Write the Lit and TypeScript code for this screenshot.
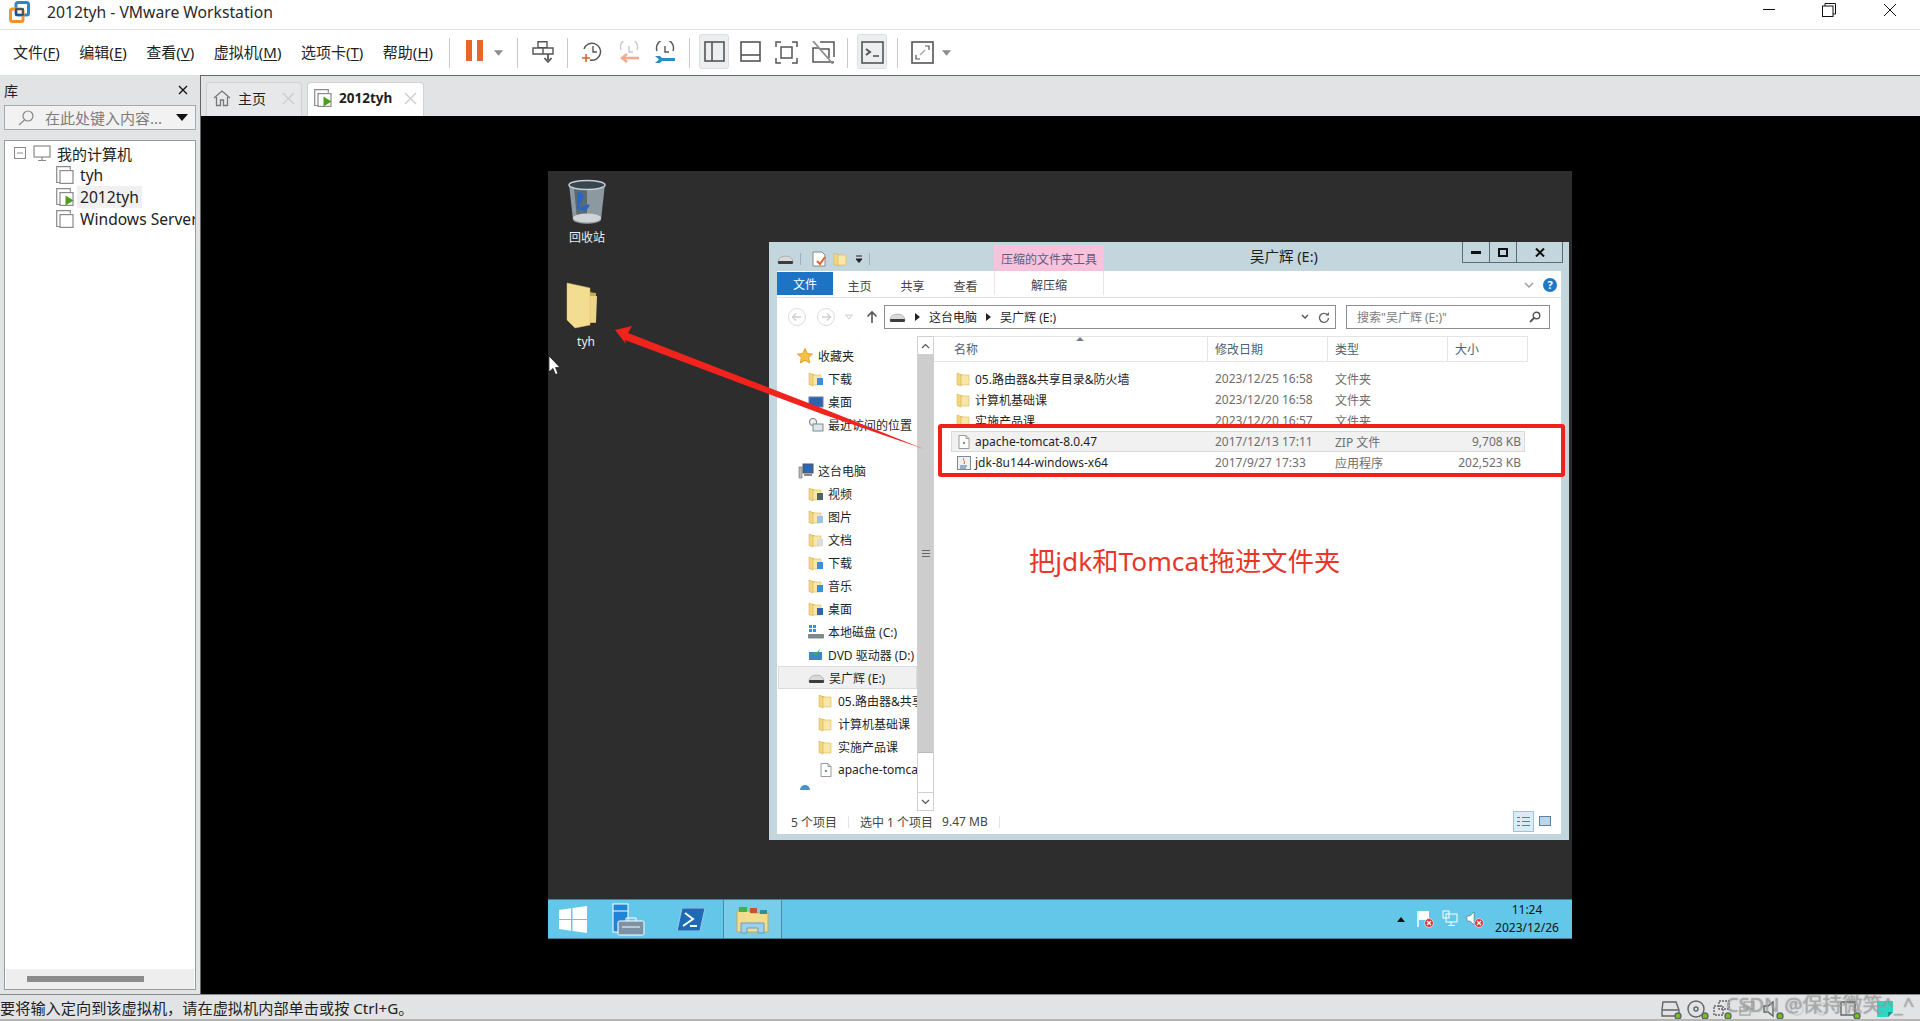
import { css, html, svg, LitElement } from "lit";
import { customElement } from "lit/decorators.js";

const FOLDER = svg`<path d="M1 3h5l1 1v10H1z" fill="#e9c765"/><path d="M4 4h9v10H4z" fill="#f8e7a6" stroke="#d9b95c" stroke-width=".6"/><path d="M1 2l4 1.5V15l-4-1.500z" fill="#f3d67f" stroke="#cfa94c" stroke-width=".5"/>`;

const folderIcon = (badge?: string) => html`<svg class="ico" viewBox="0 0 16 16">
  ${FOLDER}${badge ? svg`<rect x="9" y="7" width="6" height="7" fill=${badge}/>` : ""}
</svg>`;

const zipIcon = () => html`<svg class="ico" viewBox="0 0 16 16">
  <path d="M3 1.500h7l3 3v10H3z" fill="#fff" stroke="#9a9a9a"/>
  <path d="M10 1.500v3h3" fill="none" stroke="#9a9a9a"/>
  <path d="M7 9h2M8 8v2" stroke="#2e9e3a" stroke-width="1.200"/>
</svg>`;

const driveIcon = () => html`<svg class="ico drive" viewBox="0 0 18 12">
  <path d="M1 9c1-4 3-6 8-6s7 2 8 6z" fill="#d9d9d9" stroke="#8e8e8e" stroke-width=".6"/>
  <rect x="1" y="8" width="16" height="3.400" rx="1.400" fill="#3d3d3d"/>
</svg>`;

const vmIcon = (running = false) => html`<svg class="vm-ico" viewBox="0 0 18 18">
  <path d="M4 16.500H.7V.7h13.600v3" fill="none" stroke="#8b8b8b" stroke-width="1.200"/>
  <rect x="4" y="4.600" width="13" height="12.800" fill="#fff" stroke="#8b8b8b" stroke-width="1.200"/>
  ${running ? svg`<path d="M9.500 7.600v10l8-5z" fill="#4f9d1d"/>` : ""}
</svg>`;

const errBadge = svg`<circle cx="13" cy="13" r="4.400" fill="#d8343c" stroke="#fff" stroke-width=".6"/><path d="M11 11l4 4M15 11l-4 4" stroke="#fff" stroke-width="1.200"/>`;

const MENUS: [string, string][] = [
  ["文件", "F"],
  ["编辑", "E"],
  ["查看", "V"],
  ["虚拟机", "M"],
  ["选项卡", "T"],
  ["帮助", "H"],
];

const NAV: { label: string; level: number; icon: unknown; sel?: boolean }[] = [
  { label: "下载", level: 1, icon: folderIcon("#3b8ed8") },
  { label: "桌面", level: 1, icon: html`<svg class="ico" viewBox="0 0 16 16"><rect x="1" y="3" width="14" height="10" fill="#2f63ad" stroke="#5d7fa8"/></svg>` },
  { label: "最近访问的位置", level: 1, icon: html`<svg class="ico" viewBox="0 0 16 16"><circle cx="5" cy="5" r="3.600" fill="#eee" stroke="#777"/><rect x="5" y="7" width="10" height="7" fill="#dde6ea" stroke="#7a8a92"/></svg>` },
  { label: "", level: 0, icon: "" },
  { label: "这台电脑", level: 0, icon: html`<svg class="ico" viewBox="0 0 16 16"><rect x="5" y="1" width="10" height="9" fill="#2c66b5" stroke="#555"/><rect x="1" y="4" width="3" height="11" fill="#bbb" stroke="#666" stroke-width=".6"/><rect x="6" y="11" width="8" height="2" fill="#888"/></svg>` },
  { label: "视频", level: 1, icon: folderIcon("#50606e") },
  { label: "图片", level: 1, icon: folderIcon("#9ec4dd") },
  { label: "文档", level: 1, icon: folderIcon("#d9dde0") },
  { label: "下载", level: 1, icon: folderIcon("#3b8ed8") },
  { label: "音乐", level: 1, icon: folderIcon("#3b8ed8") },
  { label: "桌面", level: 1, icon: folderIcon("#2f63ad") },
  { label: "本地磁盘 (C:)", level: 1, icon: html`<svg class="ico" viewBox="0 0 16 16"><path d="M1 1h3v3H1zM5 1h3v3H5zM1 5h3v3H1zM5 5h3v3H5z" fill="#18a0dc"/><rect x="0" y="10" width="16" height="4.500" rx="1" fill="#7c8a8c"/></svg>` },
  { label: "DVD 驱动器 (D:)", level: 1, icon: html`<svg class="ico" viewBox="0 0 16 16"><rect x="1" y="5" width="13" height="8" fill="#3f86c8"/><path d="M4 6l4 3 5-8-5 5z" fill="#3fb04a"/></svg>` },
  { label: "吴广辉 (E:)", level: 1, icon: driveIcon(), sel: true },
  { label: "05.路由器&共享目录&防火墙", level: 2, icon: folderIcon() },
  { label: "计算机基础课", level: 2, icon: folderIcon() },
  { label: "实施产品课", level: 2, icon: folderIcon() },
  { label: "apache-tomcat-8.0.47", level: 2, icon: zipIcon() },
];

const FILES = [
  { name: "05.路由器&共享目录&防火墙", date: "2023/12/25 16:58", type: "文件夹", size: "", icon: folderIcon() },
  { name: "计算机基础课", date: "2023/12/20 16:58", type: "文件夹", size: "", icon: folderIcon() },
  { name: "实施产品课", date: "2023/12/20 16:57", type: "文件夹", size: "", icon: folderIcon() },
  { name: "apache-tomcat-8.0.47", date: "2017/12/13 17:11", type: "ZIP 文件", size: "9,708 KB", icon: zipIcon(), sel: true },
  {
    name: "jdk-8u144-windows-x64",
    date: "2017/9/27 17:33",
    type: "应用程序",
    size: "202,523 KB",
    icon: html`<svg class="ico" viewBox="0 0 16 16"><rect x="1.500" y="1.500" width="13" height="13" fill="#eef1f4" stroke="#7d8a96"/><path d="M4 11h7M4 13h6" stroke="#3f6fa8"/><path d="M8 3c-2 2 2 3 0 6" fill="none" stroke="#d9622b"/></svg>`,
  },
];

@customElement("guest-explorer")
export class GuestExplorer extends LitElement {
  static styles = css`
    :host {
      position: absolute;
      left: 221px;
      top: 71px;
      width: 800px;
      height: 598px;
      box-sizing: border-box;
      padding: 0 8px 6px;
      background: #c3d6dd;
      display: flex;
      flex-direction: column;
      color: #1f1f1f;
      font: 12px "Noto Sans", "Noto Sans CJK SC", sans-serif;
    }
    .ico {
      width: 16px;
      height: 16px;
      flex: none;
    }
    .ico.drive {
      width: 17px;
      height: 12px;
    }
    .title {
      height: 29px;
      flex: none;
      display: flex;
      position: relative;
      align-items: center;
    }
    .qat {
      display: flex;
      align-items: center;
      gap: 6px;
      padding-top: 4px;
    }
    .qat i {
      width: 1px;
      height: 12px;
      background: #9fb0b8;
    }
    .qat .doc {
      margin-left: 4px;
    }
    .context {
      position: absolute;
      left: 217px;
      top: 3px;
      width: 110px;
      height: 27px;
      background: #f9c2dc;
      color: #5d5d78;
      display: flex;
      align-items: center;
      justify-content: center;
    }
    .caption {
      position: absolute;
      left: 473px;
      top: 4px;
      font-size: 14.500px;
      line-height: 20px;
    }
    .controls {
      position: absolute;
      right: -2px;
      top: 0;
      height: 21px;
      display: flex;
      border: 1px solid #5d6c74;
      border-top: 0;
      box-sizing: border-box;
    }
    .controls span {
      display: flex;
      align-items: center;
      justify-content: center;
      border-left: 1px solid #5d6c74;
      width: 26px;
    }
    .controls span:first-child {
      border-left: 0;
      width: 26px;
    }
    .controls span:last-child {
      width: 45px;
    }
    .ribbon {
      height: 27px;
      flex: none;
      background: #fff;
      border-bottom: 1px solid #e2e2e2;
      box-sizing: border-box;
      display: flex;
      position: relative;
      align-items: flex-start;
      color: #444;
    }
    .file-tab {
      width: 56px;
      height: 23px;
      margin-top: 1px;
      background: #1e74c4;
      color: #fff;
      display: flex;
      align-items: center;
      justify-content: center;
      margin-right: -7px;
    }
    .rtab {
      margin-left: 14px;
      width: 39px;
      height: 24px;
      padding-top: 3px;
      display: flex;
      align-items: center;
      justify-content: center;
    }
    .extract {
      position: absolute;
      left: 217px;
      width: 110px;
      height: 24px;
      padding-top: 3px;
      box-sizing: border-box;
      border: solid #f2dfe8;
      border-width: 0 1px;
      display: flex;
      align-items: center;
      justify-content: center;
    }
    .ribbon-end {
      margin-left: auto;
      display: flex;
      align-items: center;
      gap: 9px;
      height: 26px;
      padding: 2px 4px 0 0;
      box-sizing: border-box;
    }
    .body {
      flex: 1;
      min-height: 0;
      background: #fff;
      display: flex;
      flex-direction: column;
    }
    .address {
      height: 38px;
      flex: none;
      display: flex;
      align-items: center;
      padding: 0 11px 0 10px;
      box-sizing: border-box;
    }
    .addr-box {
      width: 452px;
      margin-left: 6px;
      height: 24px;
      border: 1px solid #8d8d8d;
      box-sizing: border-box;
      display: flex;
      align-items: center;
      padding: 0 5px 0 4px;
      gap: 9px;
    }
    .addr-box .end {
      margin-left: auto;
      display: flex;
      gap: 9px;
      align-items: center;
    }
    .search {
      margin-left: 10px;
      flex: 1;
      height: 24px;
      border: 1px solid #8d8d8d;
      box-sizing: border-box;
      display: flex;
      align-items: center;
      padding: 0 8px 0 10px;
      color: #7d7d7d;
      justify-content: space-between;
    }
    .main {
      flex: 1;
      min-height: 0;
      display: flex;
    }
    .nav {
      width: 140px;
      flex: none;
      padding-top: 8px;
      box-sizing: border-box;
      overflow: hidden;
    }
    .nav-row {
      height: 23px;
      flex: none;
      display: flex;
      align-items: center;
      gap: 4px;
      white-space: nowrap;
      box-sizing: border-box;
      overflow: hidden;
    }
    .nav-row.sel {
      background: #f0f0f0;
      border: 1px solid #dcdcdc;
      margin-left: 1px;
    }
    .net-arc {
      display: block;
      margin: 3px 0 0 20px;
    }
    .scroll {
      width: 17px;
      flex: none;
      border: 1px solid #d0d0d0;
      border-width: 0 1px;
      box-sizing: border-box;
      display: flex;
      flex-direction: column;
    }
    .scroll .btn {
      height: 17px;
      flex: none;
      display: flex;
      align-items: center;
      justify-content: center;
      border: 1px solid #d0d0d0;
      margin: 0 -1px;
      background: #fff;
    }
    .scroll .thumb {
      height: 397px;
      flex: none;
      background: #cdcdcd;
      border-bottom: 1px solid #bbb;
      display: flex;
      align-items: center;
      justify-content: center;
    }
    .scroll .rest {
      flex: 1;
    }
    .list {
      flex: 1;
      min-width: 0;
      position: relative;
    }
    .head {
      height: 26px;
      display: grid;
      grid-template-columns: 274px 120px 120px 80px;
      color: #4d6172;
      box-sizing: border-box;
      border-bottom: 1px solid #e4e4e4;
      border-top: 1px solid #e4e4e4;
      width: 594px;
    }
    .head span {
      padding-left: 7px;
      border-right: 1px solid #e4e4e4;
      line-height: 25px;
    }
    .head span:first-child {
      padding-left: 20px;
    }
    .sort {
      position: absolute;
      left: 142px;
      top: 1px;
      width: 0;
      height: 0;
      border: 4px solid transparent;
      border-top: 0;
      border-bottom: 4px solid #6e8090;
    }
    .rows {
      padding: 6px 0 0 17px;
      width: 591px;
      box-sizing: border-box;
    }
    .row {
      height: 21px;
      box-sizing: border-box;
      display: grid;
      grid-template-columns: 264px 120px 120px 1fr;
      align-items: center;
      color: #6d6d6d;
    }
    .row.sel {
      background: #f1f1f1;
      outline: 1px solid #d9d9d9;
      outline-offset: -1px;
    }
    .row .name {
      display: flex;
      align-items: center;
      gap: 3px;
      color: #1f1f1f;
      padding-left: 5px;
    }
    .row .size {
      text-align: right;
      padding-right: 4px;
    }
    .mark {
      position: absolute;
      left: 4px;
      top: 88px;
      width: 627px;
      height: 53px;
      box-sizing: border-box;
      border: 4px solid #ef2218;
      border-radius: 3px;
    }
    .note {
      position: absolute;
      left: 95px;
      top: 207px;
      font-size: 26.300px;
      line-height: 36px;
      color: #e8362a;
      white-space: nowrap;
    }
    .status {
      height: 23px;
      flex: none;
      display: flex;
      align-items: center;
      padding: 0 0 2px 14px;
      box-sizing: border-box;
      color: #444;
    }
    .status i {
      width: 1px;
      height: 12px;
      background: #e4e4e4;
      margin: 0 11px;
    }
    .views {
      margin-left: auto;
      padding-right: 10px;
      display: flex;
      gap: 5px;
      align-items: center;
    }
    .views span {
      width: 21px;
      height: 21px;
      box-sizing: border-box;
      background: #dcecf6;
      border: 1px solid #9cc3dd;
      display: flex;
      align-items: center;
      justify-content: center;
    }
  `;

  render() {
    const navCircle = (d: string) => html`<svg width="20" height="20" viewBox="0 0 20 20">
      <circle cx="10" cy="10" r="8.500" fill="none" stroke="#dcdcdc"/>
      <path d=${d} fill="none" stroke="#d0d0d0" stroke-width="1.400"/>
    </svg>`;
    return html`
      <div class="title">
        <div class="qat">
          ${driveIcon()}<i></i>
          <svg class="ico doc" viewBox="0 0 16 16"><path d="M2 1h9l3 3v11H2z" fill="#fff" stroke="#888"/><path d="M6 10l3 3 5-7" fill="none" stroke="#e2622a" stroke-width="2"/></svg>
          <svg class="ico" viewBox="0 0 16 16">${FOLDER}</svg>
          <svg width="8" height="8" viewBox="0 0 8 8"><path d="M1 1h6M1 4h6L4 7.500z" stroke="#222" fill="#222"/></svg>
          <i></i>
        </div>
        <div class="context">压缩的文件夹工具</div>
        <div class="caption">吴广辉 (E:)</div>
        <div class="controls">
          <span><svg width="10" height="4"><rect width="10" height="3" y="1" fill="#111"/></svg></span>
          <span><svg width="10" height="9"><rect x="1" y="1" width="8" height="7" fill="none" stroke="#111" stroke-width="2"/></svg></span>
          <span><svg width="10" height="9" viewBox="0 0 10 9"><path d="M1 .5l8 8M9 .5l-8 8" stroke="#111" stroke-width="2"/></svg></span>
        </div>
      </div>
      <div class="ribbon">
        <div class="file-tab">文件</div>
        <div class="rtab">主页</div>
        <div class="rtab">共享</div>
        <div class="rtab">查看</div>
        <div class="extract">解压缩</div>
        <div class="ribbon-end">
          <svg width="10" height="6" viewBox="0 0 10 6"><path d="M1 1l4 4 4-4" fill="none" stroke="#999" stroke-width="1.400"/></svg>
          <svg width="14" height="14" viewBox="0 0 14 14"><circle cx="7" cy="7" r="7" fill="#1f78c8"/><text x="7" y="11" font-size="11" font-weight="700" text-anchor="middle" fill="#fff" font-family="Noto Sans">?</text></svg>
        </div>
      </div>
      <div class="body">
        <div class="address">
          ${navCircle("M14 10H6M9 6.500L5.500 10 9 13.500")}
          <span style="width:9px"></span>
          ${navCircle("M6 10h8M11 6.500l3.500 3.500-3.500 3.500")}
          <svg width="30" height="8" viewBox="0 0 30 8"><path d="M9.500 2h7L13 6z" fill="none" stroke="#ccc"/></svg>
          <svg width="12" height="14" viewBox="0 0 12 14"><path d="M6 13V2M1.500 6.500L6 2l4.500 4.500" fill="none" stroke="#555" stroke-width="1.600"/></svg>
          <div class="addr-box">
            ${driveIcon()}
            <svg width="5" height="8" viewBox="0 0 5 8"><path d="M0 0l5 4-5 4z" fill="#222"/></svg>
            <span>这台电脑</span>
            <svg width="5" height="8" viewBox="0 0 5 8"><path d="M0 0l5 4-5 4z" fill="#222"/></svg>
            <span>吴广辉 (E:)</span>
            <span class="end">
              <svg width="8" height="6" viewBox="0 0 8 6"><path d="M1 1l3 3 3-3" fill="none" stroke="#555" stroke-width="1.400"/></svg>
              <svg width="12" height="12" viewBox="0 0 12 12"><path d="M9.500 4A4.500 4.500 0 1 0 10.500 7" fill="none" stroke="#666" stroke-width="1.400"/><path d="M7.500 4.500h3.500V1z" fill="#666"/></svg>
            </span>
          </div>
          <div class="search">
            <span>搜索"吴广辉 (E:)"</span>
            <svg width="12" height="12" viewBox="0 0 12 12"><circle cx="7.500" cy="4.500" r="3.300" fill="none" stroke="#555" stroke-width="1.400"/><path d="M5 7l-4 4" stroke="#555" stroke-width="1.800"/></svg>
          </div>
        </div>
        <div class="main">
          <div class="nav">
            <div class="nav-row" style="padding-left:20px;gap:5px">
              <svg class="ico" viewBox="0 0 16 16"><path d="M8 .5l2.300 5 5.200.6-3.900 3.500 1.100 5.400L8 12.200 3.300 15l1.100-5.400L.5 6.100l5.200-.6z" fill="#f5c242" stroke="#d88f1e" stroke-width=".8"/></svg>
              <span>收藏夹</span>
            </div>
            ${NAV.map(
              (n) => html`<div
                class="nav-row ${n.sel ? "sel" : ""}"
                style="padding-left:${n.sel ? 29 : 21 + n.level * 10}px"
              >
                ${n.icon}<span>${n.label}</span>
              </div>`,
            )}
            <svg class="net-arc" width="16" height="6" viewBox="0 0 16 6"><path d="M3 6a5 5 0 0 1 10 0z" fill="#4a93c4"/></svg>
          </div>
          <div class="scroll">
            <div class="btn">
              <svg width="9" height="6" viewBox="0 0 9 6"><path d="M1 5l3.500-3.500L8 5" fill="none" stroke="#555" stroke-width="1.200"/></svg>
            </div>
            <div class="thumb">
              <svg width="8" height="7"><path d="M0 .5h8M0 3.500h8M0 6.500h8" stroke="#666"/></svg>
            </div>
            <div class="rest"></div>
            <div class="btn">
              <svg width="9" height="6" viewBox="0 0 9 6"><path d="M1 1l3.500 3.500L8 1" fill="none" stroke="#555" stroke-width="1.200"/></svg>
            </div>
          </div>
          <div class="list">
            <div class="head">
              <span>名称</span><span>修改日期</span><span>类型</span><span>大小</span>
            </div>
            <div class="sort"></div>
            <div class="rows">
              ${FILES.map(
                (f) => html`<div class="row ${f.sel ? "sel" : ""}">
                  <div class="name">${f.icon}<span>${f.name}</span></div>
                  <span>${f.date}</span>
                  <span>${f.type}</span>
                  <span class="size">${f.size}</span>
                </div>`,
              )}
            </div>
            <div class="mark"></div>
            <div class="note">把jdk和Tomcat拖进文件夹</div>
          </div>
        </div>
        <div class="status">
          <span>5 个项目</span><i></i><span>选中 1 个项目</span>
          <span style="margin-left:9px">9.47 MB</span><i></i>
          <div class="views">
            <span><svg width="13" height="11"><path d="M0 1.500h3M5 1.500h8M0 5.500h3M5 5.500h8M0 9.500h3M5 9.500h8" stroke="#4a7fa8"/></svg></span>
            <svg width="12" height="11"><rect x=".5" y=".5" width="11" height="9" fill="#bcd6e8" stroke="#5a84a4"/></svg>
          </div>
        </div>
      </div>
    `;
  }
}

@customElement("app-root")
export class AppRoot extends LitElement {
  static styles = css`
    :host {
      display: flex;
      flex-direction: column;
      width: 1920px;
      height: 1021px;
      overflow: hidden;
      background: #e1e3e5;
      color: #222;
      font: 15px "Noto Sans", "Noto Sans CJK SC", sans-serif;
    }
    .titlebar {
      height: 29px;
      flex: none;
      background: #fff;
      display: flex;
      align-items: center;
      padding-left: 9px;
      position: relative;
    }
    .titlebar .name {
      margin-left: 17px;
      font-size: 15.700px;
      color: #2a2a2a;
      margin-top: -5px;
    }
    .win-btns {
      margin-left: auto;
      display: flex;
      align-items: center;
      padding-right: 23px;
      gap: 47px;
      margin-top: -9px;
    }
    .toolbar {
      height: 46px;
      flex: none;
      background: #fff;
      border-top: 1px solid #e3e3e3;
      box-sizing: border-box;
      display: flex;
      align-items: center;
      position: relative;
    }
    .menus {
      display: flex;
      padding-left: 13px;
      gap: 19.500px;
      width: 445px;
      box-sizing: border-box;
      flex: none;
      font-size: 15px;
      white-space: nowrap;
      margin-top: -3px;
    }
    .menus u {
      text-underline-offset: 2px;
    }
    .sep {
      position: absolute;
      width: 1px;
      height: 30px;
      top: 8px;
      background: #c9c9c9;
    }
    .tool {
      position: absolute;
      top: 11px;
    }
    .toggle {
      position: absolute;
      top: 4px;
      width: 30px;
      height: 35px;
      box-sizing: border-box;
      background: #eceeef;
      border: 1px solid #dcdee0;
      border-radius: 3px;
    }
    .caret {
      position: absolute;
      width: 9px;
      height: 6px;
      top: 20px;
    }
    .content {
      flex: 1;
      min-height: 0;
      display: flex;
    }
    .library {
      width: 200px;
      flex: none;
      box-sizing: border-box;
      display: flex;
      flex-direction: column;
      padding: 0 4px 4px;
    }
    .lib-head {
      height: 30px;
      flex: none;
      display: flex;
      align-items: center;
      justify-content: space-between;
      padding-right: 8px;
      font-size: 14px;
    }
    .lib-search {
      height: 25px;
      flex: none;
      border: 1px solid #a6a8aa;
      background: #f2f2f2;
      box-sizing: border-box;
      display: flex;
      align-items: center;
      padding: 0 7px 0 13px;
      color: #7d7d7d;
      font-size: 15px;
      gap: 11px;
      white-space: nowrap;
    }
    .lib-search .down {
      margin-left: auto;
      width: 0;
      height: 0;
      border: 6px solid transparent;
      border-top: 7px solid #111;
      border-bottom: 0;
    }
    .tree {
      margin-top: 10px;
      flex: 1;
      min-height: 0;
      width: 192px;
      background: #fff;
      border: 1px solid #9a9a9a;
      box-sizing: border-box;
      display: flex;
      flex-direction: column;
      padding-top: 1px;
    }
    .tree-row {
      height: 22px;
      display: flex;
      align-items: center;
      white-space: nowrap;
      overflow: hidden;
      padding-left: 9px;
      gap: 3px;
      flex: none;
    }
    .tree-row.child {
      padding-left: 51px;
      gap: 6px;
      font-size: 15.600px;
    }
    .tree-row .hl {
      background: #f0f0f0;
      padding: 0 3px;
      margin-left: -3px;
      line-height: 22px;
    }
    .vm-ico {
      width: 18px;
      height: 18px;
      flex: none;
    }
    .hscroll {
      margin-top: auto;
      height: 20px;
      background: #eee;
      margin-left: 1px;
      margin-right: 1px;
      display: flex;
      align-items: center;
      padding-left: 21px;
    }
    .hscroll div {
      width: 117px;
      height: 6px;
      background: #8b8b8b;
    }
    .vmpane {
      flex: 1;
      min-width: 0;
      display: flex;
      flex-direction: column;
      border: solid #666;
      border-width: 1px 0 0 1px;
      padding-top: 6px;
    }
    .tabs {
      height: 34px;
      flex: none;
      display: flex;
      padding-left: 5px;
      gap: 5px;
      align-items: flex-end;
    }
    .tab {
      height: 34px;
      box-sizing: border-box;
      display: flex;
      align-items: center;
      border: 1px solid #cfd1d3;
      border-bottom: 0;
      border-radius: 4px 4px 0 0;
      padding: 0 6px 3px;
      gap: 7px;
      font-size: 14px;
    }
    .tab.home {
      width: 96px;
      background: #e6e8ea;
    }
    .tab.on {
      width: 117px;
      background: #fff;
      font-weight: 700;
      font-size: 13.500px;
    }
    .screen {
      flex: 1;
      min-height: 0;
      background: #000;
      padding: 55px 0 0 347px;
      box-sizing: border-box;
    }
    .guest {
      width: 1024px;
      height: 768px;
      background: #2d2d2d;
      position: relative;
      display: flex;
      flex-direction: column;
    }
    .desk-icon {
      position: absolute;
      width: 60px;
      display: flex;
      flex-direction: column;
      align-items: center;
      color: #eee;
      font-size: 12px;
    }
    .cursor {
      position: absolute;
      left: 0;
      top: 185px;
    }
    .arrow {
      position: absolute;
      left: 0;
      top: 0;
      z-index: 2;
      pointer-events: none;
    }
    .taskbar {
      margin-top: auto;
      height: 40px;
      flex: none;
      background: #63c7ea;
      border: solid #4b7f96;
      border-width: 1px 0;
      box-sizing: border-box;
      display: flex;
      align-items: center;
      font-size: 12px;
      color: #111;
    }
    .task {
      display: flex;
      align-items: center;
      height: 100%;
    }
    .task.active {
      width: 59px;
      justify-content: center;
      background: #78cdea;
      border: solid #4b8aa6;
      border-width: 0 1px;
      box-sizing: border-box;
      margin-left: 18px;
    }
    .tray {
      margin-left: auto;
      display: flex;
      align-items: center;
      gap: 8px;
      padding-right: 12px;
    }
    .tray .up {
      margin-right: 3px;
    }
    .clock {
      width: 66px;
      margin-left: 2px;
      text-align: center;
      line-height: 18px;
    }
    .statusbar {
      height: 27px;
      flex: none;
      border-top: 1px solid #8a8a8a;
      border-bottom: 2px solid #b5b5b5;
      box-sizing: border-box;
      display: flex;
      align-items: center;
      position: relative;
      font-size: 15.200px;
      white-space: nowrap;
    }
    .devices {
      position: absolute;
      left: 0;
      top: 0;
    }
    .device {
      position: absolute;
      top: 4px;
    }
    .watermark {
      position: absolute;
      left: 1726px;
      top: -4px;
      font-size: 20px;
      line-height: 28px;
      color: rgba(200, 200, 200, 0.6);
      text-shadow: 0 0 1px rgba(70, 70, 70, 0.7);
    }
    .sticky {
      position: absolute;
      left: 1876px;
      top: 5px;
    }
  `;

  private _tools() {
    const stroke = "#555";
    return html`
      <svg class="tool" style="left:466px;top:10px" width="19" height="23"><rect width="6" height="21" fill="#e8662d"/><rect x="11" width="6" height="21" fill="#e8662d"/></svg>
      <svg class="caret" style="left:494px" viewBox="0 0 10 6"><path d="M0 0h10L5 6z" fill="#8b8b8b"/></svg>
      <svg class="tool" style="left:532px" width="22" height="23" viewBox="0 0 22 23" fill="none" stroke=${stroke} stroke-width="1.400">
        <path d="M6 .7h9v6H6zM1 7h10v6H1zM11 7h10v6H11z"/><path d="M16 13v6M12.500 17l3.500 4 3.500-4" stroke-width="1.800"/>
      </svg>
      <svg class="tool" style="left:581px" width="22" height="23" viewBox="0 0 22 23" fill="none">
        <path d="M3 8a8.500 8.500 0 1 1 6 11" stroke=${stroke} stroke-width="1.400"/><path d="M12 5v6h4" stroke=${stroke} stroke-width="1.400"/>
        <path d="M1 17h8M5 13v8" stroke="#d9622b" stroke-width="1.600"/>
      </svg>
      <svg class="tool" style="left:618px" width="22" height="23" viewBox="0 0 22 23" fill="none">
        <path d="M3 9a8.500 8.500 0 1 1 16 0" stroke="#c9c9c9" stroke-width="1.400"/><path d="M11 5v6h4" stroke="#c9c9c9" stroke-width="1.400"/>
        <path d="M21 17H6M9 13l-5 4 5 4" stroke="#f4a98a" stroke-width="2.400"/>
      </svg>
      <svg class="tool" style="left:654px" width="22" height="23" viewBox="0 0 22 23" fill="none">
        <path d="M3 10a8.500 8.500 0 1 1 16 0" stroke=${stroke} stroke-width="1.400"/><path d="M11 5v6h4" stroke=${stroke} stroke-width="1.400"/>
        <path d="M1 15h5l2 2h13v3H8l-2 2H1l4-3.500z" fill="#2f8ccb"/>
      </svg>
      <div class="toggle" style="left:699px"></div>
      <svg class="tool" style="left:704px" width="21" height="21" fill="none" stroke=${stroke} stroke-width="1.600"><rect x="1" y="1" width="19" height="19"/><path d="M8 1v19"/></svg>
      <svg class="tool" style="left:740px" width="21" height="21" fill="none" stroke=${stroke} stroke-width="1.600"><rect x="1" y="1" width="19" height="19"/><path d="M1 14h19"/></svg>
      <svg class="tool" style="left:775px" width="23" height="23" fill="none" stroke=${stroke} stroke-width="1.500"><path d="M1 6V1h5M17 1h5v5M22 17v5h-5M6 22H1v-5"/><rect x="6" y="6" width="11" height="11"/></svg>
      <svg class="tool" style="left:812px" width="23" height="23" fill="none" stroke=${stroke} stroke-width="1.500"><path d="M8 1h14v15M22 21H1V7h6"/><path d="M7 8h10v9" /><path d="M1 0l20 23" stroke="#8d8f92" stroke-width="1.800"/></svg>
      <div class="toggle" style="left:857px"></div>
      <svg class="tool" style="left:861px" width="23" height="23" fill="none" stroke=${stroke} stroke-width="1.600"><rect x="1" y="1" width="21" height="21"/><path d="M5 8l4 3-4 3" stroke-width="2"/><path d="M12 15h6"/></svg>
      <svg class="tool" style="left:911px" width="23" height="23" fill="none" stroke=${stroke} stroke-width="1.600"><rect x="1" y="1" width="21" height="21"/><path d="M9 14l5-5" stroke="#aaa"/><path d="M14 5h4v4" stroke-width="1.200"/><path d="M5 14v4h4" stroke-width="1.200"/></svg>
      <svg class="caret" style="left:942px" viewBox="0 0 10 6"><path d="M0 0h10L5 6z" fill="#8b8b8b"/></svg>
    `;
  }

  private _devices() {
    const dot = (x: number) => svg`<circle cx=${x} cy="17" r="3" fill="#6fbf1f"/>`;
    return html`
      <svg class="device" style="left:1660px" width="24" height="20" fill="none" stroke="#666" stroke-width="1.400"><path d="M3 3h13l3 8v6H2v-6zM2 11h17"/>${dot(18)}</svg>
      <svg class="device" style="left:1686px" width="24" height="20" fill="none" stroke="#666" stroke-width="1.400"><circle cx="10" cy="10" r="8"/><circle cx="10" cy="10" r="2"/>${dot(19)}</svg>
      <svg class="device" style="left:1712px" width="24" height="20" fill="none" stroke="#666" stroke-width="1.400"><path d="M7 2h10v8H7zM2 7h9v9H2z" stroke-dasharray="2 1"/>${dot(16)}</svg>
      <svg class="device" style="left:1738px" width="22" height="20" fill="none" stroke="#aaa" stroke-width="1.400"><path d="M6 3h10v7H6zM2 8h10v8H2z"/></svg>
      <svg class="device" style="left:1762px" width="24" height="20" fill="none" stroke="#666" stroke-width="1.400"><path d="M2 7h4l5-4v14l-5-4H2z"/>${dot(18)}</svg>
      <svg class="device" style="left:1789px" width="18" height="20" fill="none" stroke="#ccc" stroke-width="1.400"><circle cx="8" cy="10" r="6"/></svg>
      <svg class="device" style="left:1814px" width="18" height="20" fill="none" stroke="#ccc" stroke-width="1.400"><circle cx="8" cy="10" r="6"/></svg>
      <svg class="device" style="left:1838px" width="24" height="20" fill="none" stroke="#666" stroke-width="1.400"><path d="M3 3h14v13H3z"/>${dot(19)}</svg>
      <svg class="sticky" width="18" height="18" viewBox="0 0 18 18"><path d="M1 1h16v11l-5 5H1z" fill="#2ed6c4"/><path d="M12 17v-5h5z" fill="#149b8e"/></svg>
    `;
  }

  render() {
    return html`
      <div class="titlebar">
        <svg width="21" height="22" viewBox="0 0 21 22" style="margin-top:-6px;flex:none">
          <rect x="7" y="1.500" width="12.500" height="12.500" rx="2" fill="none" stroke="#2e86c8" stroke-width="3"/>
          <rect x="1.500" y="8" width="12.500" height="12.500" rx="2" fill="none" stroke="#f0932b" stroke-width="3"/>
          <rect x="7" y="8" width="7" height="6" fill="none" stroke="#0d4a78" stroke-width="1.500"/>
        </svg>
        <span class="name">2012tyh - VMware Workstation</span>
        <div class="win-btns">
          <svg width="12" height="2"><rect width="12" height="1" fill="#111"/></svg>
          <svg width="14" height="14" fill="none" stroke="#111"><path d="M3 3V.5h10.500V11H11"/><rect x=".5" y="3" width="10.500" height="10.500"/></svg>
          <svg width="14" height="14" stroke="#111"><path d="M1 1l12 12M13 1L1 13"/></svg>
        </div>
      </div>

      <div class="toolbar">
        <div class="menus">
          ${MENUS.map(([label, key]) => html`<span>${label}(<u>${key}</u>)</span>`)}
        </div>
        ${[449, 517, 567, 689, 847, 897].map((x) => html`<div class="sep" style="left:${x}px"></div>`)}
        ${this._tools()}
      </div>

      <div class="content">
        <div class="library">
          <div class="lib-head">
            <span>库</span>
            <svg width="10" height="10" stroke="#111" stroke-width="1.300"><path d="M1 1l8 8M9 1L1 9"/></svg>
          </div>
          <div class="lib-search">
            <svg width="16" height="16" viewBox="0 0 16 16" fill="none" stroke="#888" stroke-width="1.200" style="flex:none"><circle cx="10" cy="6" r="5"/><path d="M6.500 10L1 15"/></svg>
            <span>在此处键入内容...</span>
            <i class="down"></i>
          </div>
          <div class="tree">
            <div class="tree-row">
              <svg width="12" height="12" fill="none" stroke="#8a8a8a" style="flex:none;margin-right:4px"><rect x=".5" y=".5" width="11" height="11"/><path d="M3 6h6"/></svg>
              <svg width="18" height="17" fill="none" stroke="#8b8b8b" stroke-width="1.200" style="flex:none;margin-right:3px"><rect x="1" y="1" width="16" height="11"/><path d="M9 12v3M5 15.500h8"/></svg>
              <span>我的计算机</span>
            </div>
            <div class="tree-row child">${vmIcon()}<span>tyh</span></div>
            <div class="tree-row child">${vmIcon(true)}<span class="hl">2012tyh</span></div>
            <div class="tree-row child">${vmIcon()}<span>Windows Server</span></div>
            <div class="hscroll"><div></div></div>
          </div>
        </div>

        <div class="vmpane">
          <div class="tabs">
            <div class="tab home">
              <svg width="18" height="18" viewBox="0 0 18 18" fill="none" stroke="#777" stroke-width="1.300" style="flex:none"><path d="M1 9l8-7 8 7M3.500 8v8.500h4V11h3v5.500h4V8"/></svg>
              <span>主页</span>
              <svg width="13" height="13" stroke="#cfcfcf" stroke-width="1.500" style="margin-left:auto;flex:none"><path d="M1 1l11 11M12 1L1 12"/></svg>
            </div>
            <div class="tab on">
              ${vmIcon(true)}
              <span>2012tyh</span>
              <svg width="13" height="13" stroke="#cfcfcf" stroke-width="1.500" style="margin-left:auto;flex:none"><path d="M1 1l11 11M12 1L1 12"/></svg>
            </div>
          </div>
          <div class="screen">
            <div class="guest">
              <div class="desk-icon" style="left:9px;top:8px">
                <svg width="38" height="46" viewBox="0 0 38 46">
                  <path d="M1 5l4 36c3 5 25 5 28 0l4-36z" fill="#8d99a1"/>
                  <path d="M6 10l3 30c3 2 7 2 10 2V10z" fill="#5d6a73"/>
                  <ellipse cx="19" cy="6" rx="18" ry="4.500" fill="#3a464e" stroke="#c5d0d6" stroke-width="1.500"/>
                  <path d="M9 14c5-4 9 4 5 8l-3 6c4 0 8-4 11-2l-4 6-9-2z" fill="#2c66b8"/>
                  <ellipse cx="19" cy="39" rx="14" ry="4.500" fill="#d0d4d6"/>
                </svg>
                <span style="margin-top:3px">回收站</span>
              </div>
              <div class="desk-icon" style="left:8px;top:111px">
                <svg width="32" height="48" viewBox="0 0 32 48" style="margin-right:8px">
                  <path d="M8 8l22 3v30H8z" fill="#c9a94f"/>
                  <path d="M30 40l-21 1V14l22 0z" fill="#eed688"/>
                  <path d="M1 1l23 5v37L9 46l-8-8z" fill="#f3dd92" stroke="#d8bc68" stroke-width=".5"/>
                </svg>
                <span style="margin-top:3px">tyh</span>
              </div>
              <svg class="cursor" width="13" height="20" viewBox="0 0 13 20"><path d="M1 0v16l4-3.500 2.500 6 2.500-1-2.500-6H12z" fill="#fff" stroke="#000" stroke-width=".6"/></svg>

              <guest-explorer></guest-explorer>

              <svg class="arrow" width="500" height="400">
                <path d="M67 159l17-4-4 7 196 76 100 40-102-35L77 169l1 4z" fill="#f0241c"/>
              </svg>

              <div class="taskbar">
                <div class="task" style="padding-left:11px">
                  <svg width="28" height="27" viewBox="0 0 28 27"><path d="M0 4l12-1.800V13H0zM13.500 2L28 0v13H13.500zM0 14h12v10.800L0 23zM13.500 14H28v13l-14.500-2z" fill="#fff"/></svg>
                </div>
                <div class="task" style="padding-left:25px">
                  <svg width="33" height="33" viewBox="0 0 33 33">
                    <rect x="1" y="1" width="15" height="28" fill="#2184d6" stroke="#fff"/>
                    <path d="M1 8h15" stroke="#fff"/>
                    <rect x="6" y="18" width="26" height="14" rx="1.500" fill="#7c93a6" stroke="#fff"/>
                    <path d="M14 18v-3h10v3M10 24h18" fill="none" stroke="#fff"/>
                  </svg>
                </div>
                <div class="task" style="padding-left:32px">
                  <svg width="28" height="23" viewBox="0 0 28 23">
                    <path d="M5 0h23l-5 23H0z" fill="#1c6bb4" stroke="#a5c8e6"/>
                    <path d="M8 5l8 6-10 7" fill="none" stroke="#fff" stroke-width="2"/>
                    <path d="M13 18h7" stroke="#fff" stroke-width="2"/>
                  </svg>
                </div>
                <div class="task active">
                  <svg width="33" height="29" viewBox="0 0 33 29">
                    <path d="M1 6h12l2 2h17v19H1z" fill="#f2dc8d" stroke="#c9a95c"/>
                    <path d="M3 2h8v5H3z" fill="#4fae3d"/><path d="M14 3h7v5h-7z" fill="#c3552d"/><path d="M24 5h7v4h-7z" fill="#2e8f96"/>
                    <path d="M5 18h23v10h-6v-5H11v5H5z" fill="#9fd0ea" stroke="#5f9fc6"/>
                  </svg>
                </div>
                <div class="tray">
                  <svg class="up" width="8" height="5"><path d="M0 5l4-5 4 5z" fill="#111"/></svg>
                  <svg width="18" height="18" viewBox="0 0 18 18"><path d="M2 1v16" stroke="#fff" stroke-width="1.500"/><path d="M3 1h10v9H3z" fill="#fff"/>${errBadge}</svg>
                  <svg width="16" height="18" viewBox="0 0 16 18" fill="none" stroke="#fff"><rect x="1" y="1" width="6" height="7"/><rect x="4" y="4" width="11" height="8"/><path d="M9 12v3M6 15.500h7"/></svg>
                  <svg width="18" height="18" viewBox="0 0 18 18"><path d="M1 6h3l4-4v13l-4-4H1z" fill="#fff" stroke="#333" stroke-width=".4"/>${errBadge}</svg>
                  <div class="clock">11:24<br />2023/12/26</div>
                </div>
              </div>
            </div>
          </div>
        </div>
      </div>

      <div class="statusbar">
        <span>要将输入定向到该虚拟机，请在虚拟机内部单击或按 Ctrl+G。</span>
        <div class="devices">${this._devices()}</div>
        <div class="watermark">CSDN @保持微笑^_^</div>
      </div>
    `;
  }
}
